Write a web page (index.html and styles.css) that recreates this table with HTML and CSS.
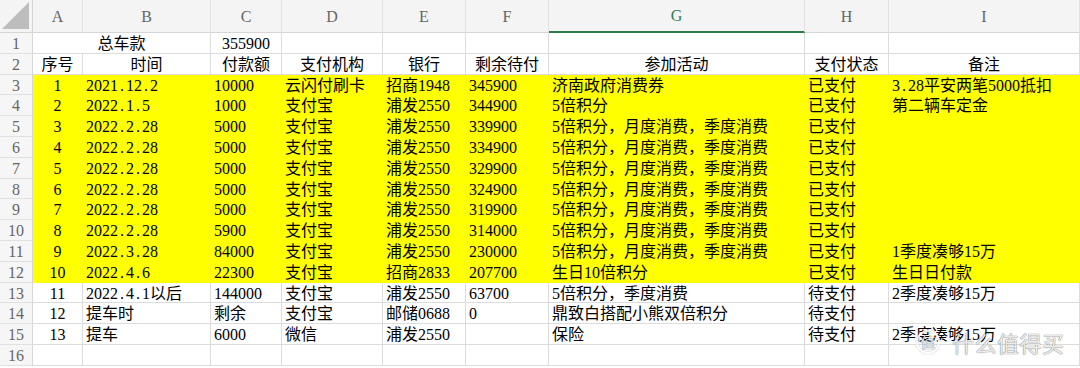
FILE: index.html
```html
<!DOCTYPE html>
<html lang="zh">
<head>
<meta charset="utf-8">
<link rel="stylesheet" href="styles.css">
</head>
<body>
<div class="sheet">
  <div class="corner"><span class="tri"></span></div>
  <div class="ch">A</div><div class="ch">B</div><div class="ch">C</div><div class="ch">D</div><div class="ch">E</div><div class="ch">F</div><div class="ch sel">G</div><div class="ch">H</div><div class="ch">I</div>

  <div class="rh">1</div><div class="c ctr span2">总车款</div><div class="c ctr">355900</div><div class="c"></div><div class="c"></div><div class="c"></div><div class="c"></div><div class="c"></div><div class="c"></div>

  <div class="rh">2</div><div class="c ctr">序号</div><div class="c ctr">时间</div><div class="c ctr">付款额</div><div class="c ctr">支付机构</div><div class="c ctr">银行</div><div class="c ctr">剩余待付</div><div class="c ctr">参加活动</div><div class="c ctr">支付状态</div><div class="c ctr">备注</div>

  <div class="rh">3</div><div class="c y ctr">1</div><div class="c y">2021<span class="d">.</span>12<span class="d">.</span>2</div><div class="c y">10000</div><div class="c y">云闪付刷卡</div><div class="c y">招商1948</div><div class="c y">345900</div><div class="c y">济南政府消费券</div><div class="c y">已支付</div><div class="c y">3<span class="d">.</span>28平安两笔5000抵扣</div>

  <div class="rh">4</div><div class="c y ctr">2</div><div class="c y">2022<span class="d">.</span>1<span class="d">.</span>5</div><div class="c y">1000</div><div class="c y">支付宝</div><div class="c y">浦发2550</div><div class="c y">344900</div><div class="c y">5倍积分</div><div class="c y">已支付</div><div class="c y">第二辆车定金</div>

  <div class="rh">5</div><div class="c y ctr">3</div><div class="c y">2022<span class="d">.</span>2<span class="d">.</span>28</div><div class="c y">5000</div><div class="c y">支付宝</div><div class="c y">浦发2550</div><div class="c y">339900</div><div class="c y">5倍积分，月度消费，季度消费</div><div class="c y">已支付</div><div class="c y"></div>

  <div class="rh">6</div><div class="c y ctr">4</div><div class="c y">2022<span class="d">.</span>2<span class="d">.</span>28</div><div class="c y">5000</div><div class="c y">支付宝</div><div class="c y">浦发2550</div><div class="c y">334900</div><div class="c y">5倍积分，月度消费，季度消费</div><div class="c y">已支付</div><div class="c y"></div>

  <div class="rh">7</div><div class="c y ctr">5</div><div class="c y">2022<span class="d">.</span>2<span class="d">.</span>28</div><div class="c y">5000</div><div class="c y">支付宝</div><div class="c y">浦发2550</div><div class="c y">329900</div><div class="c y">5倍积分，月度消费，季度消费</div><div class="c y">已支付</div><div class="c y"></div>

  <div class="rh">8</div><div class="c y ctr">6</div><div class="c y">2022<span class="d">.</span>2<span class="d">.</span>28</div><div class="c y">5000</div><div class="c y">支付宝</div><div class="c y">浦发2550</div><div class="c y">324900</div><div class="c y">5倍积分，月度消费，季度消费</div><div class="c y">已支付</div><div class="c y"></div>

  <div class="rh">9</div><div class="c y ctr">7</div><div class="c y">2022<span class="d">.</span>2<span class="d">.</span>28</div><div class="c y">5000</div><div class="c y">支付宝</div><div class="c y">浦发2550</div><div class="c y">319900</div><div class="c y">5倍积分，月度消费，季度消费</div><div class="c y">已支付</div><div class="c y"></div>

  <div class="rh">10</div><div class="c y ctr">8</div><div class="c y">2022<span class="d">.</span>2<span class="d">.</span>28</div><div class="c y">5900</div><div class="c y">支付宝</div><div class="c y">浦发2550</div><div class="c y">314000</div><div class="c y">5倍积分，月度消费，季度消费</div><div class="c y">已支付</div><div class="c y"></div>

  <div class="rh">11</div><div class="c y ctr">9</div><div class="c y">2022<span class="d">.</span>3<span class="d">.</span>28</div><div class="c y">84000</div><div class="c y">支付宝</div><div class="c y">浦发2550</div><div class="c y">230000</div><div class="c y">5倍积分，月度消费，季度消费</div><div class="c y">已支付</div><div class="c y">1季度凑够15万</div>

  <div class="rh">12</div><div class="c y ctr">10</div><div class="c y">2022<span class="d">.</span>4<span class="d">.</span>6</div><div class="c y">22300</div><div class="c y">支付宝</div><div class="c y">招商2833</div><div class="c y">207700</div><div class="c y">生日10倍积分</div><div class="c y">已支付</div><div class="c y">生日日付款</div>

  <div class="rh">13</div><div class="c ctr">11</div><div class="c">2022<span class="d">.</span>4<span class="d">.</span>1以后</div><div class="c">144000</div><div class="c">支付宝</div><div class="c">浦发2550</div><div class="c">63700</div><div class="c">5倍积分，季度消费</div><div class="c">待支付</div><div class="c">2季度凑够15万</div>

  <div class="rh">14</div><div class="c ctr">12</div><div class="c">提车时</div><div class="c">剩余</div><div class="c">支付宝</div><div class="c">邮储0688</div><div class="c">0</div><div class="c">鼎致白搭配小熊双倍积分</div><div class="c">待支付</div><div class="c"></div>

  <div class="rh">15</div><div class="c ctr">13</div><div class="c">提车</div><div class="c">6000</div><div class="c">微信</div><div class="c">浦发2550</div><div class="c"></div><div class="c">保险</div><div class="c">待支付</div><div class="c">2季度凑够15万</div>

  <div class="rh">16</div><div class="c"></div><div class="c"></div><div class="c"></div><div class="c"></div><div class="c"></div><div class="c"></div><div class="c"></div><div class="c"></div><div class="c"></div>
</div>
<div class="wm"><span class="wm-logo">值</span><span class="wm-text">什么值得买</span></div>
</body>
</html>
```

FILE: styles.css
```css
* { box-sizing: border-box; }
html, body { margin: 0; padding: 0; background: #fff; }
body {
  width: 1080px;
  height: 368px;
  overflow: hidden;
  position: relative;
  font-family: "Liberation Serif", "Noto Sans CJK SC", serif;
  color: #000;
}
.sheet {
  display: grid;
  grid-template-columns: 33px 50px 128px 71px 101px 83px 83px 256px 84px 191px;
  grid-template-rows: 33px repeat(16, 20.8px);
}
.corner {
  background: #f4f4f4;
  border-right: 1px solid #d6d6d6;
  border-bottom: 1px solid #d6d6d6;
  position: relative;
}
.tri {
  position: absolute;
  right: 3px;
  bottom: 3px;
  width: 0;
  height: 0;
  border-left: 27px solid transparent;
  border-bottom: 27px solid #bdbdbd;
}
.ch {
  background: #f4f4f4;
  border-right: 1px solid #e2e2e2;
  border-bottom: 1px solid #d6d6d6;
  color: #666;
  font-size: 16px;
  display: flex;
  align-items: center;
  justify-content: center;
  padding-top: 1px;
}
.ch.sel {
  color: #2f7d4a;
  border-bottom: 2px solid #2b7a48;
}
.rh {
  background: #f6f6f6;
  border-right: 1px solid #d6d6d6;
  border-bottom: 1px solid #e0e0e0;
  color: #666;
  font-size: 16px;
  text-align: center;
  line-height: 18.8px;
  padding-top: 2px;
}
.c {
  font-size: 16px;
  line-height: 18.8px;
  padding: 2px 0 0 3px;
  white-space: nowrap;
  overflow: visible;
  border-right: 1px solid #dcdcdc;
  border-bottom: 1px solid #dcdcdc;
}
.c.ctr { text-align: center; padding-left: 0; }
.c.span2 { grid-column: span 2; }
.c.y {
  background: #ffff00;
  border-color: #ffff00;
}
.d {
  display: inline-block;
  width: 8px;
  text-align: center;
}
.wm {
  position: absolute;
  left: 916px;
  top: 330px;
  display: flex;
  align-items: center;
  gap: 12px;
  color: rgba(255, 255, 255, 0.9);
  font-family: "Noto Sans CJK SC", sans-serif;
  text-shadow: 0 0 1px rgba(0, 0, 0, 0.55), 0 0 1px rgba(0, 0, 0, 0.35);
}
.wm-logo {
  width: 24px;
  height: 24px;
  border-radius: 50%;
  border: 2px solid rgba(255, 255, 255, 0.9);
  box-shadow: 0 0 1px rgba(0, 0, 0, 0.5), inset 0 0 1px rgba(0, 0, 0, 0.5);
  font-size: 15px;
  line-height: 20px;
  text-align: center;
}
.wm-text {
  font-size: 22px;
  line-height: 24px;
  letter-spacing: 0.5px;
}
```
